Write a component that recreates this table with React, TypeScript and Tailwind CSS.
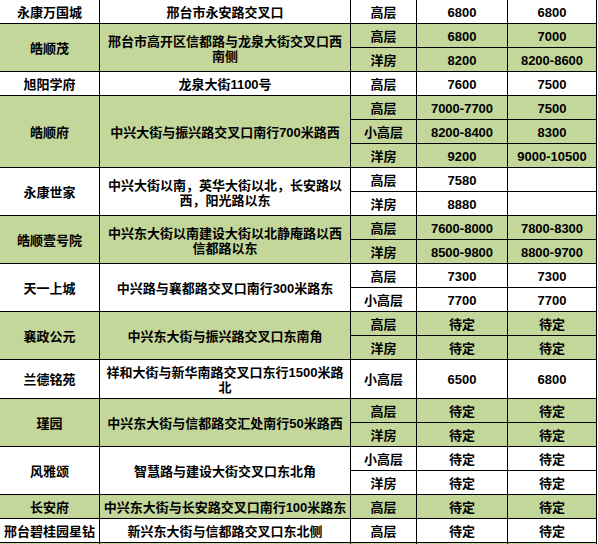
import React from 'react';

type Group = {
  name: string;
  addr: string;
  green: boolean;
  rows: [string, string, string][];
};

const groups: Group[] = [
  { name: '永康万国城', addr: '邢台市永安路交叉口', green: false, rows: [['高层', '6800', '6800']] },
  {
    name: '皓顺茂',
    addr: '邢台市高开区信都路与龙泉大街交叉口西南侧',
    green: true,
    rows: [
      ['高层', '6800', '7000'],
      ['洋房', '8200', '8200-8600'],
    ],
  },
  { name: '旭阳学府', addr: '龙泉大街1100号', green: false, rows: [['高层', '7600', '7500']] },
  {
    name: '皓顺府',
    addr: '中兴大街与振兴路交叉口南行700米路西',
    green: true,
    rows: [
      ['高层', '7000-7700', '7500'],
      ['小高层', '8200-8400', '8300'],
      ['洋房', '9200', '9000-10500'],
    ],
  },
  {
    name: '永康世家',
    addr: '中兴大街以南，英华大街以北，长安路以西，阳光路以东',
    green: false,
    rows: [
      ['高层', '7580', ''],
      ['洋房', '8880', ''],
    ],
  },
  {
    name: '皓顺壹号院',
    addr: '中兴东大街以南建设大街以北静庵路以西信都路以东',
    green: true,
    rows: [
      ['高层', '7600-8000', '7800-8300'],
      ['洋房', '8500-9800', '8800-9700'],
    ],
  },
  {
    name: '天一上城',
    addr: '中兴路与襄都路交叉口南行300米路东',
    green: false,
    rows: [
      ['高层', '7300', '7300'],
      ['小高层', '7700', '7700'],
    ],
  },
  {
    name: '襄政公元',
    addr: '中兴东大街与振兴路交叉口东南角',
    green: true,
    rows: [
      ['高层', '待定', '待定'],
      ['洋房', '待定', '待定'],
    ],
  },
  {
    name: '兰德铭苑',
    addr: '祥和大街与新华南路交叉口东行1500米路北',
    green: false,
    rows: [['小高层', '6500', '6800']],
  },
  {
    name: '瑾园',
    addr: '中兴东大街与信都路交汇处南行50米路西',
    green: true,
    rows: [
      ['高层', '待定', '待定'],
      ['洋房', '待定', '待定'],
    ],
  },
  {
    name: '风雅颂',
    addr: '智慧路与建设大街交叉口东北角',
    green: false,
    rows: [
      ['小高层', '待定', '待定'],
      ['洋房', '待定', '待定'],
    ],
  },
  {
    name: '长安府',
    addr: '中兴东大街与长安路交叉口南行100米路东',
    green: true,
    rows: [['高层', '待定', '待定']],
  },
  {
    name: '邢台碧桂园星钻',
    addr: '新兴东大街与信都路交叉口东北侧',
    green: false,
    rows: [['高层', '待定', '待定']],
  },
  { name: '', addr: '', green: true, rows: [['', '', '']] },
];

const spans: Record<number, string> = {
  1: 'row-span-1',
  2: 'row-span-2',
  3: 'row-span-3',
};

export default function App() {
  return (
    <div className="w-[598px] h-[544px] overflow-hidden bg-white text-black">
      <div className="grid w-fit grid-cols-[99px_250px_65px_90px_88px] grid-rows-[repeat(15,23px)_38px_repeat(7,23px)] gap-px bg-black pr-px font-['Liberation_Sans','Noto_Sans_CJK_SC',sans-serif] text-[13px] font-bold">
        {groups.map((g, gi) => {
          const bg = g.green ? 'bg-[#c4d79b]' : 'bg-white';
          const span = spans[g.rows.length];
          return (
            <React.Fragment key={gi}>
              <div className={`${span} ${bg} flex items-center justify-center pt-[2px] whitespace-nowrap`}>
                {g.name}
              </div>
              <div className={`${span} ${bg} flex items-center justify-center px-[2px] pt-[2px] text-center leading-[15px]`}>
                {g.addr}
              </div>
              {g.rows.map((r, ri) => (
                <React.Fragment key={ri}>
                  {r.map((c, ci) => (
                    <div key={ci} className={`${bg} flex items-center justify-center pt-[2px] whitespace-nowrap`}>
                      {c}
                    </div>
                  ))}
                </React.Fragment>
              ))}
            </React.Fragment>
          );
        })}
      </div>
    </div>
  );
}
